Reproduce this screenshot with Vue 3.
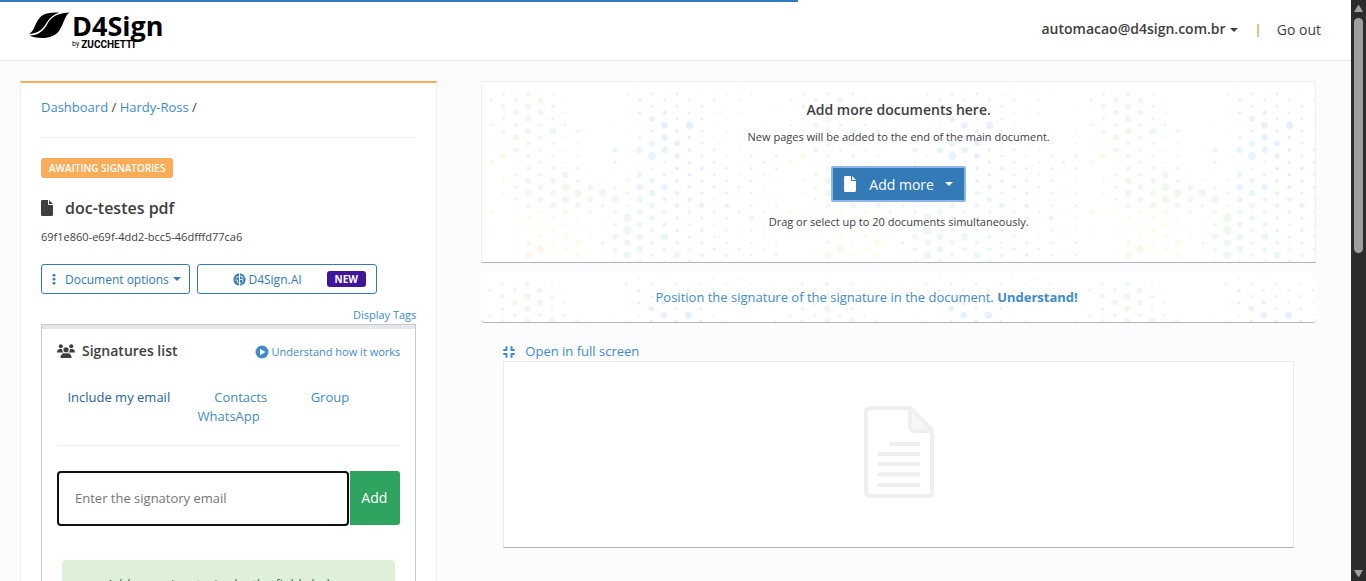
<script setup>
import { computed, ref } from 'vue'

const email = ref('')
const progress = 58.4

// Dot sizes per column, top to bottom.
const columns = [
  '041322500052210', '45454714411111', '056576244432320', '57775557755457',
  '066454456654584', '34474456676544', '123333378865553', '11153344864375',
  '000111126642311', '01111113842242', '011206424854653', '32221213439978',
  '244237267766775', '33637936776554', '235777347555854', '33346644554457',
  '133844445543455', '23333344464445', '232223334333343', '22222233453334',
  '222122223232232', '21112333335333', '001111322222222', '12122332232233',
]

function dotColor(col, y) {
  if (col < 2) return y > 130 ? '#fdf3e6' : y > 60 ? '#fafbe8' : '#f0f8ee'
  if (col < 8) {
    if (y > 160 && col < 5) return '#fef6e6'
    if (y > 125) return '#fbfce9'
    if (y < 15 || (col > 4 && y < 60)) return '#ebf8f6'
    return '#f0f8ee'
  }
  if (col < 12) return y < 88 ? '#e9f7fc' : '#eef8ef'
  if (y < 56) return '#e8f1fa'
  if (col < 15) return y < 115 ? '#e7f5fc' : '#ecf8f3'
  if (y > 150 && col < 18) return '#e9f8f8'
  return y > 100 ? '#e8f3fb' : '#e8effa'
}

const dots = computed(() =>
  columns.flatMap((sizes, col) =>
    [...sizes].map((s, row) => {
      const y = (col % 2 ? 12 : 6) + row * 12.4
      return { x: 9 + col * 12.4, y, r: Number(s) * 0.46, fill: dotColor(col, y) }
    }).filter((d) => d.r > 0)
  )
)
</script>

<template>
  <div class="window">
    <div class="progress" :style="{ width: progress + '%' }"></div>
    <div class="page">
      <header class="topbar">
        <a class="logo" href="#" aria-label="D4Sign by Zucchetti">
          <svg class="leaf" viewBox="0 0 126 80" aria-hidden="true">
            <path d="M2 65 C18 60 20 34 34 18 C46 4 62 1 94 1 C74 8 64 18 53 36 C43 53 28 64 2 65Z" />
            <path d="M125 1 C110 10 108 34 94 55 C80 76 44 85 4 71 C32 69 46 57 57 38 C67 20 78 4 125 1Z" />
          </svg>
          <span class="wordmark">
            <span class="brand">D4Sign</span>
            <span class="byline"><small>by</small>ZUCCHETTI</span>
          </span>
        </a>
        <nav class="account">
          <button class="user" type="button">automacao@d4sign.com.br<i class="caret"></i></button>
          <span class="bar">|</span>
          <a class="out" href="#">Go out</a>
        </nav>
      </header>

      <main class="columns">
        <section class="panel">
          <nav class="crumbs"><a href="#">Dashboard</a> / <a href="#">Hardy-Ross</a> /</nav>
          <span class="status">AWAITING SIGNATORIES</span>
          <h1 class="doc">
            <svg class="file" viewBox="0 0 384 512" aria-hidden="true"><path d="M0 48C0 20 20 0 48 0H224V128c0 18 14 32 32 32H384V464c0 28-20 48-48 48H48c-28 0-48-20-48-48zM384 128H256V0z" /></svg>
            doc-testes pdf
          </h1>
          <p class="uuid">69f1e860-e69f-4dd2-bcc5-46dfffd77ca6</p>
          <div class="actions">
            <button class="outline options" type="button">
              <svg class="more" viewBox="0 0 4 12" aria-hidden="true"><rect x="0.5" y="1" width="3" height="2.6" rx="1" /><rect x="0.5" y="5" width="3" height="2.6" rx="1" /><rect x="0.5" y="9" width="3" height="2.6" rx="1" /></svg>
              <span>Document options</span><i class="caret"></i>
            </button>
            <button class="outline ai" type="button">
              <svg class="brain" viewBox="0 0 24 24" aria-hidden="true">
                <path d="M11 1C8 0 6 2 6 3C3 4 2 6 2.500 8C0 10 0 14 2 16C2 19 4 21 6.500 21C8 24 11 23 11 22ZM13 1C16 0 18 2 18 3C21 4 22 6 21.500 8C24 10 24 14 22 16C22 19 20 21 17.500 21C16 24 13 23 13 22Z" />
                <path class="cut" d="M11 7H7V10M3 13H8V17M13 6H17V9H20M13 12H18V17M11 18H8M13 19H16" />
              </svg>
              <span>D4Sign.AI</span><b class="new">NEW</b>
            </button>
          </div>
          <a class="tags" href="#">Display Tags</a>

          <section class="signers">
            <div class="signers-head">
              <h2>
                <svg class="users" viewBox="0 0 36 28" aria-hidden="true">
                  <circle cx="7.500" cy="4.500" r="4" /><circle cx="28.500" cy="4.500" r="4" />
                  <path d="M0 17C0 12 3 10 6 10H10C10 13 11 15 13 17ZM36 17C36 12 33 10 30 10H26C26 13 25 15 23 17Z" />
                  <circle cx="18" cy="11.500" r="5.200" />
                  <path d="M7 28C7 21 11 18.500 15 18.500H21C25 18.500 29 21 29 28Z" />
                </svg>
                Signatures list
              </h2>
              <a class="how" href="#">
                <svg viewBox="0 0 14 14" aria-hidden="true"><circle cx="7" cy="7" r="6.500" /><path class="play" d="M5 3.800V10.200L10.500 7Z" /></svg>
                Understand how it works
              </a>
            </div>
            <nav class="sources">
              <a class="current" href="#">Include my email</a>
              <a href="#">Contacts</a>
              <a href="#">Group</a>
              <a href="#" class="whats">WhatsApp</a>
            </nav>
            <form class="add" @submit.prevent>
              <input v-model="email" type="email" placeholder="Enter the signatory email" aria-label="Signatory email" />
              <button type="submit">Add</button>
            </form>
            <p class="hint">Add your signatories by the fields below.</p>
          </section>
        </section>

        <section class="work">
          <div class="card drop">
            <svg class="dots" aria-hidden="true">
              <defs>
                <pattern id="dot-tile" width="300" height="190" patternUnits="userSpaceOnUse">
                  <circle v-for="(d, i) in dots" :key="i" :cx="d.x" :cy="d.y" :r="d.r" :fill="d.fill" />
                </pattern>
              </defs>
              <rect width="100%" height="100%" fill="url(#dot-tile)" />
            </svg>
            <h2>Add more documents here.</h2>
            <p>New pages will be added to the end of the main document.</p>
            <button class="more-btn" type="button">
              <svg class="file" viewBox="0 0 384 512" aria-hidden="true"><path d="M0 48C0 20 20 0 48 0H224V128c0 18 14 32 32 32H384V464c0 28-20 48-48 48H48c-28 0-48-20-48-48zM384 128H256V0z" /></svg>
              <span>Add more</span><i class="caret"></i>
            </button>
            <p>Drag or select up to 20 documents simultaneously.</p>
          </div>
          <div class="card position">
            <svg class="dots" aria-hidden="true"><rect width="100%" height="100%" fill="url(#dot-tile)" /></svg>
            <a href="#">Position the signature of the signature in the document. <b>Understand!</b></a>
          </div>
          <div class="viewer">
            <a class="full" href="#">
              <svg viewBox="0 0 12 12" aria-hidden="true"><path d="M3.500 1V4H1M8.500 1V4H11M1 8H3.500V11M11 8H8.500V11" /></svg>
              Open in full screen
            </a>
            <div class="preview">
              <svg viewBox="0 0 70 92" aria-hidden="true">
                <path d="M45 2V20Q45 25 50 25H68Z" fill="#f7f7f7" />
                <path d="M5 2H46L68 24V86Q68 90 64 90H6Q2 90 2 86V6Q2 2 6 2ZM46 2V20Q46 25 51 25H68" fill="none" stroke="#efefef" stroke-width="4" />
                <path d="M25 38H56M14 48H56M14 58H56M14 68.500H56M14 79H56" stroke="#efefef" stroke-width="4" />
              </svg>
            </div>
          </div>
        </section>
      </main>
    </div>
    <div class="scrollbar" aria-hidden="true">
      <svg viewBox="0 0 9 7"><path d="M4.500 0Q5 0 5.500 1L9 7H0L3.500 1Q4 0 4.500 0Z" /></svg>
      <div class="thumb"></div>
      <svg class="down" viewBox="0 0 9 7"><path d="M4.500 0Q5 0 5.500 1L9 7H0L3.500 1Q4 0 4.500 0Z" /></svg>
    </div>
  </div>
</template>

<style>
body { margin: 0; overflow: hidden; }
</style>

<style scoped>
* { box-sizing: border-box; }
.window {
  position: relative;
  display: flex;
  height: 100vh;
  overflow: hidden;
  background: #fcfcff;
  color: #3e3e3e;
  font: 13px/19px "Open Sans", "Noto Sans", sans-serif;
}
a { color: #428bca; text-decoration: none; }
button, input { font: inherit; }
h1, h2, p { margin: 0; }
svg { flex: none; fill: currentColor; }
.progress { position: absolute; top: 0; left: 0; height: 2px; background: #337ab7; }
.page { flex: 1; min-width: 0; }
.caret {
  display: inline-block;
  flex: none;
  margin-left: 4px;
  border: 4px solid transparent;
  border-top-color: currentColor;
  border-bottom: 0;
  vertical-align: middle;
}
.topbar {
  display: flex;
  justify-content: space-between;
  height: 61px;
  padding: 0 30px 0 28px;
  background: #fff;
  border-bottom: 1px solid #e7e7ec;
}
.logo { display: flex; padding-top: 12px; color: #000; }
.leaf { width: 42px; height: 27px; }
.wordmark { display: flex; flex-direction: column; margin-left: 2px; }
.brand { font-size: 27px; font-weight: 700; line-height: 28px; }
.byline { font-family: Roboto, sans-serif; font-size: 10px; font-weight: 700; line-height: 8px; }
.byline small { margin-right: 2px; font-size: 7px; font-weight: 400; vertical-align: 2px; }
.account { display: flex; align-items: center; padding-bottom: 1px; font-size: 14px; font-weight: 500; }
.user { padding: 0 0 2px; border: 0; background: none; color: inherit; font-weight: 600; }
.bar { margin: 0 15px 0 17px; color: #e8963f; font-size: 13px; font-weight: 600; }
.out { color: inherit; }
.columns {
  display: grid;
  grid-template-columns: 1fr 2fr;
  column-gap: 44px;
  padding: 20px 35px 0 20px;
}
.panel {
  display: flex;
  flex-direction: column;
  align-items: flex-start;
  padding: 15px 20px 0;
  background: #fff;
  border: 1px solid #efeff2;
  border-top: 2px solid #f9ad59;
}
.crumbs { width: 100%; padding-bottom: 20px; border-bottom: 1px solid #eee; }
.status {
  margin-top: 20px;
  padding: 0 8px;
  border-radius: 3px;
  background: #f9ad59;
  color: #fff;
  font-size: 10px;
  font-weight: 600;
  line-height: 20px;
}
.doc { display: flex; align-items: center; gap: 12px; margin-top: 20px; font-size: 16px; font-weight: 600; line-height: 20px; }
.file { width: 12px; height: 16px; }
.uuid { margin-top: 9px; font-size: 11px; }
.actions { display: flex; gap: 7px; width: 100%; margin-top: 18px; }
.outline {
  display: flex;
  align-items: center;
  height: 30px;
  padding: 0 10px;
  border: 1px solid #337ab7;
  border-radius: 3px;
  background: #fff;
  color: #337ab7;
  font-size: 12px;
  white-space: nowrap;
}
.options { width: 149px; }
.more { width: 4px; height: 12px; margin-right: 9px; }
.ai { justify-content: flex-end; width: 180px; }
.brain { width: 13px; height: 13px; margin-right: 2px; }
.cut { fill: none; stroke: #fff; stroke-width: 1.5; }
.new { margin-left: 25px; padding: 0 8px; border-radius: 3px; background: #41159b; color: #fff; font-size: 10px; line-height: 16px; }
.tags { align-self: flex-end; margin-top: 12px; font-size: 11px; line-height: 18px; }
.signers { width: 100%; padding: 0 15px; border: 1px solid #c8c8c8; border-bottom: 0; }
.signers::before { content: ""; display: block; height: 4px; margin: 0 -15px; background: #e5e6e9; }
.signers-head { display: flex; justify-content: space-between; align-items: center; padding-top: 12px; }
.signers-head h2 { display: flex; align-items: center; gap: 7px; font-size: 14px; font-weight: 600; line-height: 20px; }
.users { width: 18px; height: 14px; }
.how { display: flex; align-items: center; gap: 3px; padding-top: 2px; font-size: 11px; line-height: 18px; }
.how svg { width: 14px; height: 14px; }
.play { fill: #fff; }
.sources {
  display: grid;
  grid-template-columns: 36% 35% 17%;
  justify-items: center;
  margin-top: 27px;
  padding-bottom: 19px;
  border-bottom: 1px solid #eee;
}
.sources .current { color: #2a6496; }
.whats { grid-column: 2; justify-self: start; margin-left: 17px; }
.add { display: flex; gap: 1px; margin-top: 25px; }
.add input {
  flex: 1;
  min-width: 0;
  height: 55px;
  padding: 0 16px 1px;
  border: 2px solid #101010;
  border-radius: 4px;
  background: #fff;
}
.add input::placeholder { color: #757575; }
.add button { width: 50px; height: 54px; padding: 0 2px 2px 0; border: 0; border-radius: 0 3px 3px 0; background: #2fa360; color: #fff; font-size: 14px; }
.hint { margin: 34px 5px 0; padding: 15px; border-radius: 4px; background: #dff0d8; color: #2a7a4b; text-align: center; }
.work { min-width: 0; }
.card { position: relative; background: #fff; text-align: center; }
.dots { position: absolute; inset: 0; width: 100%; height: 100%; }
.card > :not(.dots) { position: relative; }
.drop { padding: 18px 0 31px; border: 1px solid #efefef; border-bottom-color: #b3b3b5; }
.drop h2 { font-size: 14px; font-weight: 600; line-height: 20px; }
.drop p { margin-top: 7px; font-size: 11px; }
.more-btn {
  display: inline-flex;
  align-items: center;
  height: 36px;
  margin: 20px 0 3px;
  padding: 0 11px;
  border: 2px solid #8fb8e6;
  border-radius: 2px;
  background: #337ab7;
  color: #fff;
  font-size: 14px;
}
.more-btn .file { margin-right: 13px; }
.more-btn .caret { margin-left: 11px; }
.position { margin-top: 9px; padding: 16px 64px 15px 0; border-radius: 4px; border-bottom: 1px solid #b3b3b5; }
.viewer { padding: 19px 22px 0; }
.full { display: flex; align-items: center; gap: 10px; }
.full svg { width: 12px; height: 12px; fill: none; stroke: currentColor; stroke-width: 2; stroke-linecap: round; stroke-linejoin: round; }
.preview {
  display: flex;
  justify-content: center;
  padding: 44px 0 49px;
  border: 1px solid #e9e9ec;
  border-bottom-color: #b3b3b5;
  background: #fff;
}
.preview svg { width: 70px; height: 92px; }
.scrollbar { display: flex; flex-direction: column; align-items: center; gap: 6px; width: 15px; padding: 5px 0 4px; background: #2c2c2c; color: #9f9f9f; }
.scrollbar svg { width: 9px; height: 7px; }
.thumb { width: 9px; height: 41%; border-radius: 5px; background: #9f9f9f; }
.down { margin-top: auto; transform: rotate(180deg); }
</style>
